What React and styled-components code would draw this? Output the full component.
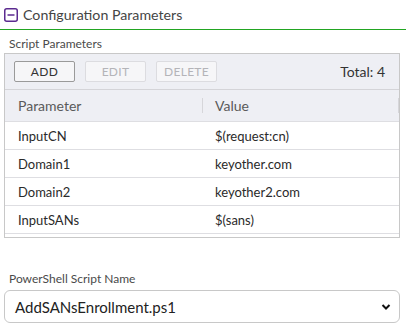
import styled, { createGlobalStyle } from "styled-components";

const GlobalStyle = createGlobalStyle`
  body {
    margin: 0;
    background: #fff;
    font-family: Lato, "Open Sans", sans-serif;
  }
`;

const Page = styled.div`
  width: 406px;
`;

const SectionHeader = styled.div`
  display: flex;
  align-items: center;
  gap: 5px;
  height: 30px;
  padding-left: 4px;
  border-bottom: 1px solid #22a522;
  box-sizing: border-box;
`;

const Title = styled.span`
  font-size: 14.2px;
  color: #454545;
`;

const Body = styled.div`
  padding: 0 6px 0 4px;
`;

const Label = styled.div`
  font-size: 12px;
  line-height: 14px;
  color: #4a4a4a;
  padding: ${(p) => p.$top}px 0 0 5px;
  margin-bottom: ${(p) => p.$bottom}px;
`;

const GridBox = styled.div`
  border: 1px solid #c8c8c8;
`;

const Toolbar = styled.div`
  display: flex;
  align-items: center;
  gap: 10px;
  height: 35px;
  padding: 0 14px 0 9px;
  background: #eeeff4;
  border-bottom: 1px solid #d4d4d8;
`;

const Button = styled.button`
  width: 61px;
  height: 21px;
  padding: 0;
  font-family: inherit;
  font-size: 12px;
  letter-spacing: 0.3px;
  background: #f6f6f8;
  color: ${(p) => (p.disabled ? "#b4b4b8" : "#333")};
  border: 1px solid ${(p) => (p.disabled ? "#dcdce0" : "#9a9a9a")};
  border-radius: 2px;
`;

const Total = styled.span`
  margin-left: auto;
  font-size: 14px;
  color: #333;
`;

const Row = styled.div`
  display: grid;
  grid-template-columns: 198px 1fr;
  height: ${(p) => (p.$head ? 31 : 27)}px;
  align-items: center;
  background: ${(p) => (p.$head ? "#eeeff4" : "#fff")};
  border-bottom: 1px solid #dedee2;
  font-size: ${(p) => (p.$head ? 14 : 13)}px;
  color: ${(p) => (p.$head ? "#5a5a5a" : "#2a2a2a")};
`;

const Cell = styled.div`
  padding-left: ${(p) => (p.$first ? 13 : 12)}px;
  height: 100%;
  display: flex;
  align-items: center;
  position: relative;
`;

const HeadCell = styled(Cell)`
  &::after {
    content: "";
    position: absolute;
    right: 0;
    top: 8px;
    bottom: 8px;
    width: 1px;
    background: #d6d6da;
  }
`;

const Rows = styled.div`
  height: 115px;
  overflow: hidden;
`;

const Select = styled.div`
  display: flex;
  align-items: center;
  justify-content: space-between;
  height: 33px;
  box-sizing: border-box;
  border: 1px solid #c8c8c8;
  border-radius: 6px;
  padding: 0 8px 0 10px;
  font-size: 15px;
  color: #222;
`;

const params = [
  ["InputCN", "$(request:cn)"],
  ["Domain1", "keyother.com"],
  ["Domain2", "keyother2.com"],
  ["InputSANs", "$(sans)"],
];

const MinusIcon = () => (
  <svg width="14" height="14" viewBox="0 0 14 14">
    <rect x="0.75" y="0.75" width="12.5" height="12.5" rx="2" fill="none" stroke="#5b2a8f" strokeWidth="1.5" />
    <line x1="3.5" y1="7" x2="10.5" y2="7" stroke="#5b2a8f" strokeWidth="1.5" />
  </svg>
);

const Chevron = () => (
  <svg width="10" height="8" viewBox="0 0 10 8">
    <path d="M1.5 2 L5 5.5 L8.5 2" fill="none" stroke="#111" strokeWidth="2" />
  </svg>
);

export default function App() {
  return (
    <Page>
      <GlobalStyle />
      <SectionHeader>
        <MinusIcon />
        <Title>Configuration Parameters</Title>
      </SectionHeader>
      <Body>
        <Label $top={7} $bottom={2}>Script Parameters</Label>
        <GridBox>
          <Toolbar>
            <Button>ADD</Button>
            <Button disabled>EDIT</Button>
            <Button disabled>DELETE</Button>
            <Total>Total: 4</Total>
          </Toolbar>
          <Row $head>
            <HeadCell $first>Parameter</HeadCell>
            <HeadCell>Value</HeadCell>
          </Row>
          <Rows>
            {params.map(([name, value]) => (
              <Row key={name}>
                <Cell $first>{name}</Cell>
                <Cell>{value}</Cell>
              </Row>
            ))}
          </Rows>
        </GridBox>
        <Label $top={34} $bottom={4}>PowerShell Script Name</Label>
        <Select>
          <span>AddSANsEnrollment.ps1</span>
          <Chevron />
        </Select>
      </Body>
    </Page>
  );
}
